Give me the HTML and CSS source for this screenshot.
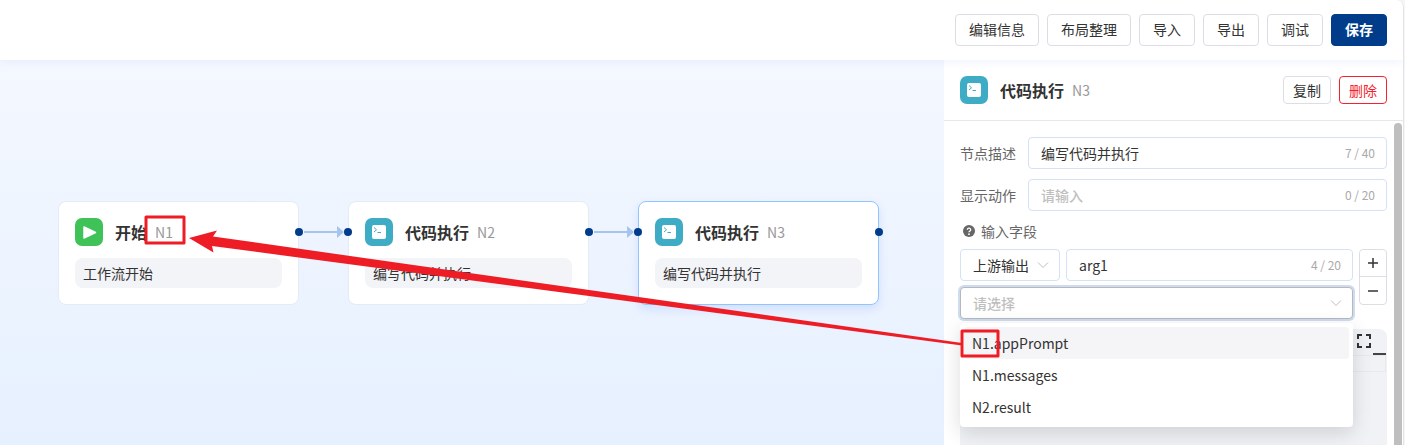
FILE: index.html
```
<!DOCTYPE html>
<html lang="zh-CN">
<head>
  <meta charset="UTF-8">
  <meta name="viewport" content="width=device-width, initial-scale=1.0">
  <title>工作流</title>
  <link rel="stylesheet" href="styles.css">
</head>
<body>

<svg class="defs" aria-hidden="true">
  <symbol id="icon-code" viewBox="0 0 28 28">
    <rect width="28" height="28" rx="7" fill="#3eacc5"/>
    <rect x="7" y="7" width="14" height="14" rx="2" fill="#fff"/>
    <path d="M9 9.500l2.500 2.300L9 14M12.500 14.500h3.500" fill="none" stroke="#3eacc5" stroke-width="1"/>
  </symbol>
  <symbol id="icon-start" viewBox="0 0 28 28">
    <rect width="28" height="28" rx="7" fill="#3fc257"/>
    <path d="M9 9v11l11.500-5.500z" fill="#fff" stroke="#fff" stroke-width="1.500" stroke-linejoin="round"/>
  </symbol>
  <symbol id="icon-down" viewBox="0 0 12 12">
    <path d="M1 3.500l5 5 5-5" fill="none" stroke="#bfbfbf" stroke-width="1"/>
  </symbol>
</svg>

<div class="page">
  <header class="toolbar">
    <button class="btn">编辑信息</button>
    <button class="btn">布局整理</button>
    <button class="btn">导入</button>
    <button class="btn">导出</button>
    <button class="btn">调试</button>
    <button class="btn btn-primary">保存</button>
  </header>

  <div class="main">
    <main class="canvas">
      <svg class="edges" aria-hidden="true">
        <path d="M304 172h33M594 172h33" stroke="#a5c4ee" stroke-width="2"/>
        <path d="M337 166l7 6-7 6zM627 166l7 6-7 6z" fill="#a5c4ee"/>
      </svg>
      <section class="node node-1">
        <div class="node-head">
          <svg class="node-icon"><use href="#icon-start"/></svg>
          <h2 class="node-title">开始</h2>
          <span class="node-id">N1</span>
        </div>
        <p class="node-desc">工作流开始</p>
        <i class="port port-out"></i>
      </section>
      <section class="node node-2">
        <div class="node-head">
          <svg class="node-icon"><use href="#icon-code"/></svg>
          <h2 class="node-title">代码执行</h2>
          <span class="node-id">N2</span>
        </div>
        <p class="node-desc">编写代码并执行</p>
        <i class="port port-in"></i>
        <i class="port port-out"></i>
      </section>
      <section class="node node-3 selected">
        <div class="node-head">
          <svg class="node-icon"><use href="#icon-code"/></svg>
          <h2 class="node-title">代码执行</h2>
          <span class="node-id">N3</span>
        </div>
        <p class="node-desc">编写代码并执行</p>
        <i class="port port-in"></i>
        <i class="port port-out"></i>
      </section>
    </main>

    <aside class="panel">
      <div class="panel-head">
        <svg class="node-icon"><use href="#icon-code"/></svg>
        <h2 class="node-title">代码执行</h2>
        <span class="node-id">N3</span>
        <div class="panel-actions">
          <button class="btn btn-small">复制</button>
          <button class="btn btn-small btn-danger">删除</button>
        </div>
      </div>

      <div class="panel-body">
        <form class="form">
          <div class="row">
            <label class="label" for="desc">节点描述</label>
            <div class="field">
              <input class="input" id="desc" type="text" value="编写代码并执行">
              <span class="count">7 / 40</span>
            </div>
          </div>
          <div class="row">
            <label class="label" for="action">显示动作</label>
            <div class="field">
              <input class="input" id="action" type="text" placeholder="请输入">
              <span class="count">0 / 20</span>
            </div>
          </div>

          <div class="section-title">
            <svg class="help" viewBox="0 0 12 12" aria-hidden="true">
              <circle cx="6" cy="6" r="6" fill="#666"/>
              <path d="M4.300 4.700a1.700 1.600 0 1 1 2.500 1.400Q6 6.500 6 7.300" fill="none" stroke="#fff" stroke-width="1.300"/>
              <circle cx="6" cy="9.200" r="0.900" fill="#fff"/>
            </svg>
            <span>输入字段</span>
          </div>

          <div class="args">
            <div class="arg-fields">
              <div class="arg-line">
                <div class="field field-source">
                  <select class="select" aria-label="来源"><option>上游输出</option></select>
                  <svg class="arrow"><use href="#icon-down"/></svg>
                </div>
                <div class="field">
                  <input class="input" type="text" value="arg1" aria-label="字段名">
                  <span class="count">4 / 20</span>
                </div>
              </div>
              <div class="field focused">
                <select class="select empty" aria-label="上游字段"><option>请选择</option></select>
                <svg class="arrow"><use href="#icon-down"/></svg>
                <ul class="dropdown" role="listbox">
                  <li class="option active" role="option">N1.appPrompt</li>
                  <li class="option" role="option">N1.messages</li>
                  <li class="option" role="option">N2.result</li>
                </ul>
              </div>
            </div>
            <div class="stepper">
              <button class="step" type="button" aria-label="添加">
                <svg class="step-icon" viewBox="0 0 12 12"><path d="M6 1v10M1 6h10" stroke="#333" stroke-width="1.500"/></svg>
              </button>
              <button class="step" type="button" aria-label="删除字段">
                <svg class="step-icon" viewBox="0 0 12 12"><path d="M1 6h10" stroke="#333" stroke-width="1.500"/></svg>
              </button>
            </div>
          </div>

          <div class="editor">
            <div class="editor-head">
              <button class="expand" type="button" aria-label="全屏">
                <svg class="expand-icon" viewBox="0 0 14 14"><path d="M1 5V1h4M9 1h4v4M13 9v4H9M5 13H1V9" fill="none" stroke="#333" stroke-width="2"/></svg>
              </button>
              <i class="cursor-mark"></i>
            </div>
            <div class="editor-line"></div>
          </div>
        </form>
        <div class="scrollbar"></div>
      </div>
    </aside>
  </div>

  <!-- red marks linking the option to the node id -->
  <svg class="marks" aria-hidden="true">
    <g fill="none" stroke="#ee1c25" stroke-width="3" stroke-linejoin="round">
      <rect x="146" y="217" width="38" height="26"/>
      <rect x="962" y="331" width="36" height="25"/>
    </g>
    <path d="M189 238L217 230.500L213 236.500L962 343V345.500L212 246L213.500 252.500Z" fill="#ee1c25"/>
  </svg>
</div>

</body>
</html>
```
FILE: styles.css
```
* {
  box-sizing: border-box;
}
body {
  margin: 0;
  background: #f5f5f6;
  font-family: "Noto Sans CJK SC", sans-serif;
  font-size: 14px;
  line-height: 20px;
  color: #333;
}
h2, p, ul {
  margin: 0;
  padding: 0;
}
button, input, select {
  font: inherit;
  color: inherit;
}
.defs {
  display: none;
}
.page {
  position: relative;
  display: flex;
  flex-direction: column;
  height: 100vh;
  margin-right: 1px;
  overflow: hidden;
  background: #fff;
  border-right: 1px solid #e3e4e8;
  border-top-right-radius: 8px;
}

/* toolbar */
.toolbar {
  position: relative;
  z-index: 1;
  display: flex;
  justify-content: flex-end;
  gap: 8px;
  padding: 14px 16px;
  background: #fff;
  box-shadow: 0 2px 8px rgba(60, 100, 240, 0.08);
}
.btn {
  height: 32px;
  padding: 0 13px 2px;
  background: #fff;
  border: 1px solid #dcdee4;
  border-radius: 4px;
}
.btn-primary {
  background: #003c8a;
  border-color: #003c8a;
  color: #fff;
  font-weight: 700;
}
.btn-small {
  height: 28px;
  padding: 0 9px;
}
.btn-danger {
  border-color: #f5222d;
  color: #f5222d;
}

/* canvas */
.main {
  display: flex;
  flex: 1;
  min-height: 0;
}
.canvas {
  position: relative;
  flex: 1;
  background: linear-gradient(#f4f8ff, #e6f0ff);
}
.edges {
  position: absolute;
  top: 0;
  left: 0;
  width: 100%;
  height: 100%;
}
.node {
  position: absolute;
  top: 141px;
  width: 241px;
  padding: 16px;
  background: #fff;
  border: 1px solid #e4ebf7;
  border-radius: 8px;
}
.node-1 {
  left: 58px;
}
.node-2 {
  left: 348px;
}
.node-3 {
  left: 638px;
}
.selected {
  border-color: #91c5ff;
  box-shadow: 0 4px 10px rgba(60, 110, 240, 0.15);
}
.node-head {
  display: flex;
  align-items: center;
  margin-bottom: 12px;
}
.node-icon {
  width: 28px;
  height: 28px;
  margin-right: 12px;
}
.node-title {
  margin-right: 8px;
  font-size: 16px;
  font-weight: 700;
}
.node-id {
  font-size: 14px;
  color: #999;
}
.node-desc {
  padding: 5px 8px;
  background: #f3f4f8;
  border-radius: 8px;
}
.port {
  position: absolute;
  top: 26px;
  width: 8px;
  height: 8px;
  background: #003c8a;
  border-radius: 50%;
}
.port-in {
  left: -5px;
}
.port-out {
  right: -5px;
}

/* side panel */
.panel {
  display: flex;
  flex-direction: column;
  width: 459px;
  background: #fff;
}
.panel-head {
  display: flex;
  align-items: center;
  padding: 16px;
  border-bottom: 1px solid #e6e7ea;
}
.panel-actions {
  display: flex;
  gap: 8px;
  margin-left: auto;
}
.panel-body {
  display: flex;
  flex: 1;
  min-height: 0;
}
.form {
  display: flex;
  flex-direction: column;
  flex: 1;
  padding: 16px 7px 0 16px;
}
.scrollbar {
  width: 8px;
  margin: 2px 1px 0 0;
  background: #bfbfbf;
  border-radius: 4px 4px 0 0;
}
.row {
  display: flex;
  align-items: center;
  margin-bottom: 10px;
}
.label {
  width: 68px;
  color: #666;
}
.field {
  position: relative;
  display: flex;
  align-items: center;
  flex: 1;
  height: 32px;
  border: 1px solid #d3e2f7;
  border-radius: 4px;
  background: #fff;
}
.input {
  flex: 1;
  min-width: 0;
  height: 30px;
  padding: 0 12px;
  background: none;
  border: 0;
  outline: 0;
}
.input::placeholder {
  color: #bfbfbf;
  font-weight: 500;
}
.count {
  padding-right: 11px;
  font-size: 12px;
  color: #aaa;
}
.section-title {
  display: flex;
  align-items: center;
  gap: 6px;
  margin-bottom: 8px;
  padding-left: 3px;
  color: #666;
}
.help {
  width: 12px;
  height: 12px;
}
.args {
  display: flex;
  align-items: flex-start;
  gap: 6px;
}
.arg-fields {
  display: flex;
  flex-direction: column;
  flex: 1;
  gap: 6px;
}
.arg-line {
  display: flex;
  gap: 6px;
}
.arg-fields > .field {
  flex: none;
}
.field-source {
  flex: 0 0 100px;
}
.select {
  width: 100%;
  height: 30px;
  padding: 0 12px;
  appearance: none;
  background: none;
  border: 0;
  outline: 0;
}
.select.empty {
  color: #bfbfbf;
  font-weight: 500;
}
.arrow {
  position: absolute;
  right: 10px;
  width: 12px;
  height: 12px;
  pointer-events: none;
}
.focused {
  border-color: #b5b8bf;
  box-shadow: 0 0 0 2px #cfdcef;
}
.dropdown {
  position: absolute;
  z-index: 2;
  top: 35px;
  left: -1px;
  right: -1px;
  padding: 4px;
  background: #fff;
  border-radius: 4px;
  box-shadow: 0 6px 20px rgba(0, 0, 0, 0.14);
  list-style: none;
}
.option {
  padding: 6px 8px;
  border-radius: 4px;
}
.option.active {
  background: #f5f5f7;
}
.stepper {
  width: 28px;
  border: 1px solid #dcdee4;
  border-radius: 4px;
}
.step {
  display: flex;
  align-items: center;
  justify-content: center;
  width: 100%;
  height: 26px;
  padding: 0;
  background: none;
  border: 0;
}
.step + .step {
  height: 28px;
  border-top: 1px solid #dcdee4;
}
.step-icon {
  width: 12px;
  height: 12px;
}
.editor {
  flex: 1;
  margin-top: 10px;
  background: #f1f2f6;
  border-radius: 8px 8px 0 0;
}
.editor-head {
  display: flex;
  align-items: flex-end;
  justify-content: flex-end;
  gap: 2px;
  height: 26px;
  padding-right: 1px;
}
.expand {
  display: flex;
  padding: 0 0 7px;
  background: none;
  border: 0;
}
.expand-icon {
  width: 14px;
  height: 14px;
}
.cursor-mark {
  width: 13px;
  height: 2px;
  background: #444;
}
.editor-line {
  height: 17px;
  margin-right: 1px;
  border: 1px solid #e9eaed;
}

.marks {
  position: absolute;
  z-index: 3;
  top: 0;
  left: 0;
  width: 100%;
  height: 100%;
  pointer-events: none;
}
```
